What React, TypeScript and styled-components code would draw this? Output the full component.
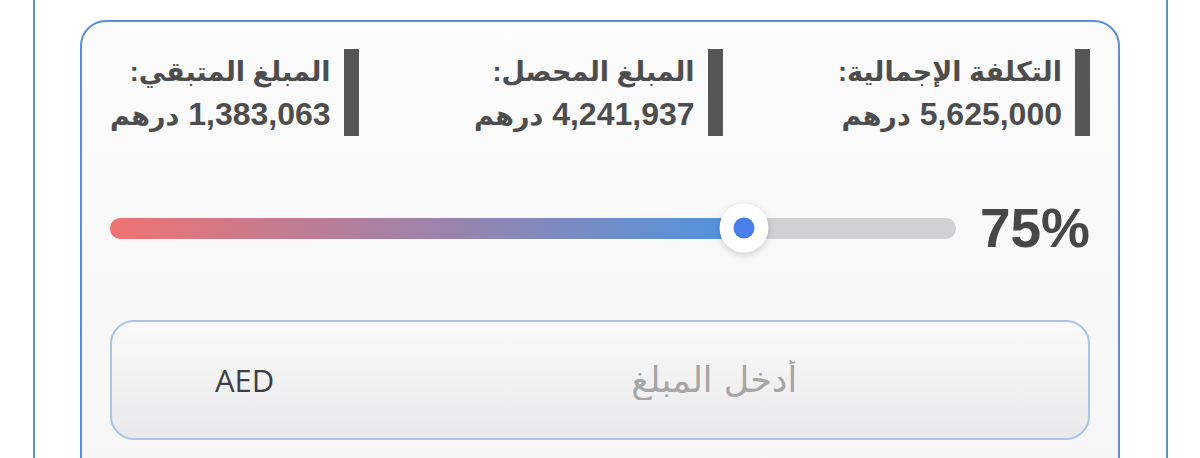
import React from 'react';
import styled, { createGlobalStyle } from 'styled-components';

const GlobalStyle = createGlobalStyle`
  html, body {
    margin: 0;
    padding: 0;
    background: #ffffff;
    overflow: hidden;
  }
  body {
    font-family: "Liberation Sans", "DejaVu Sans", sans-serif;
  }
`;

const Frame = styled.div`
  margin: 0 32px 0 33px;
  height: 458px;
  box-sizing: border-box;
  border-left: 2px solid #5d8fd3;
  border-right: 2px solid #5d8fd3;
  padding: 20px 46px 0 45px;
`;

const Card = styled.div`
  direction: rtl;
  height: 480px;
  box-sizing: border-box;
  border: 2px solid #5b8ed6;
  border-radius: 26px;
  background: linear-gradient(180deg, #fcfcfc 0%, #f5f5f6 100%);
  padding: 27px 28px 0;
  display: flex;
  flex-direction: column;
  gap: 68px;
`;

const StatsRow = styled.div`
  display: flex;
  justify-content: space-between;
`;

const Stat = styled.div`
  height: 87px;
  box-sizing: border-box;
  border-inline-start: 15px solid #565656;
  padding-inline-start: 13px;
  color: #4d4d4d;
  font-weight: 700;
  display: flex;
  flex-direction: column;
  justify-content: center;
`;

const StatLabel = styled.div`
  white-space: nowrap;
  font-size: 27px;
  line-height: 42px;
`;

const StatValue = styled.div`
  white-space: nowrap;
  font-size: 32px;
  line-height: 42px;
`;

const Unit = styled.span`
  font-size: 27px;
  line-height: 1;
`;

const SliderRow = styled.div`
  direction: ltr;
  display: flex;
  align-items: center;
  gap: 24px;
  height: 48px;
`;

const Track = styled.div`
  position: relative;
  flex: 1;
  height: 21px;
  border-radius: 11px;
  background: #d1d1d3;
`;

const Fill = styled.div`
  position: absolute;
  left: 0;
  top: 0;
  bottom: 0;
  border-radius: 11px;
  background: linear-gradient(90deg, #f07272 0%, #4d94e0 100%);
`;

const Thumb = styled.div`
  position: absolute;
  top: 50%;
  width: 49px;
  height: 49px;
  border-radius: 50%;
  background: #ffffff;
  transform: translate(-50%, -50%);
  box-shadow: 0 2px 7px rgba(0, 0, 0, 0.18);
  display: flex;
  align-items: center;
  justify-content: center;

  &::after {
    content: '';
    width: 21px;
    height: 21px;
    border-radius: 50%;
    background: #4a7ee8;
  }
`;

const Percent = styled.span`
  font-size: 55px;
  font-weight: 700;
  color: #474747;
  line-height: 1;
`;

const AmountBox = styled.div`
  direction: ltr;
  height: 120px;
  box-sizing: border-box;
  border: 2px solid #aac4e6;
  border-radius: 24px;
  background: linear-gradient(180deg, #fafafa 0%, #e9e9eb 100%);
  display: flex;
  align-items: center;
  padding: 0 0 0 103px;
`;

const Currency = styled.span`
  font-family: "Open Sans", "Liberation Sans", sans-serif;
  font-size: 31px;
  color: #3b4048;
  margin-right: 66px;
`;

const AmountInput = styled.input`
  flex: 1;
  min-width: 0;
  direction: rtl;
  text-align: center;
  border: none;
  outline: none;
  background: transparent;
  font-family: "DejaVu Sans", sans-serif;
  font-size: 35px;
  color: #333;

  &::placeholder {
    color: #a6a6a6;
  }
`;

const stats = [
  { label: 'التكلفة الإجمالية:', value: '5,625,000' },
  { label: 'المبلغ المحصل:', value: '4,241,937' },
  { label: 'المبلغ المتبقي:', value: '1,383,063' },
];

export default function App() {
  const progress = 75;
  return (
    <>
      <GlobalStyle />
      <Frame>
        <Card>
          <StatsRow>
            {stats.map((s) => (
              <Stat key={s.label}>
                <StatLabel>{s.label}</StatLabel>
                <StatValue>
                  {s.value} <Unit>درهم</Unit>
                </StatValue>
              </Stat>
            ))}
          </StatsRow>
          <SliderRow>
            <Track>
              <Fill style={{ width: `${progress}%` }} />
              <Thumb style={{ left: `${progress}%` }} />
            </Track>
            <Percent>{progress}%</Percent>
          </SliderRow>
          <AmountBox>
            <Currency>AED</Currency>
            <AmountInput placeholder="أدخل المبلغ" />
          </AmountBox>
        </Card>
      </Frame>
    </>
  );
}
